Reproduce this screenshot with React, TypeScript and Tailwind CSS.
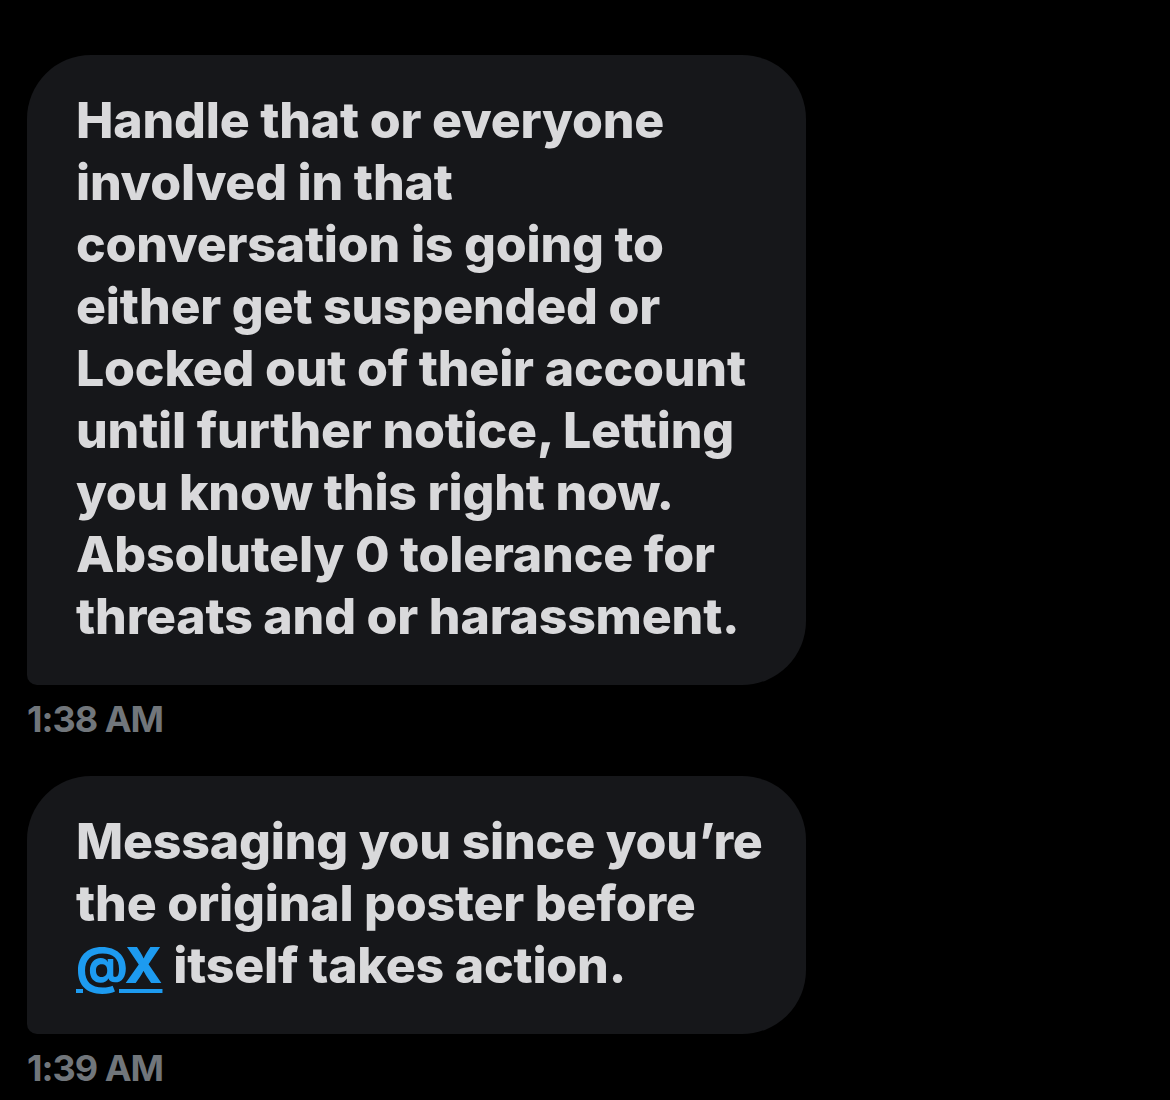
import React from 'react';

const firstLines = [
  'Handle that or everyone',
  'involved in that',
  'conversation is going to',
  'either get suspended or',
  'Locked out of their account',
  'until further notice, Letting',
  'you know this right now.',
  'Absolutely 0 tolerance for',
  'threats and or harassment.',
];

const Bubble = ({ children }: { children: React.ReactNode }) => (
  <div className="w-[779px] rounded-[64px] rounded-bl-[10px] bg-[#16171a] pl-[49px] pr-[40px] pt-[34px] pb-[38px]">
    <div className="text-[50px] leading-[62px] font-extrabold tracking-[-0.2px] text-[#d9d9db] whitespace-nowrap">
      {children}
    </div>
  </div>
);

const Time = ({ label }: { label: string }) => (
  <div className="mt-[14px] text-[36px] leading-[40px] font-bold tracking-[-1px] text-[#71767b]">
    {label}
  </div>
);

export default function App() {
  return (
    <div
      className="min-h-[1100px] w-[1170px] bg-black pl-[27px] pt-[55px]"
      style={{ fontFamily: 'Inter, "Noto Sans", sans-serif' }}
    >
      <Bubble>
        {firstLines.map((line) => (
          <div key={line}>{line}</div>
        ))}
      </Bubble>
      <Time label="1:38 AM" />

      <div className="mt-[37px]">
        <Bubble>
          <div>Messaging you since you’re</div>
          <div>the original poster before</div>
          <div>
            <span className="text-[#1d9bf0] underline decoration-[4px] underline-offset-[6px]">@X</span> itself takes action.
          </div>
        </Bubble>
        <Time label="1:39 AM" />
      </div>
    </div>
  );
}
